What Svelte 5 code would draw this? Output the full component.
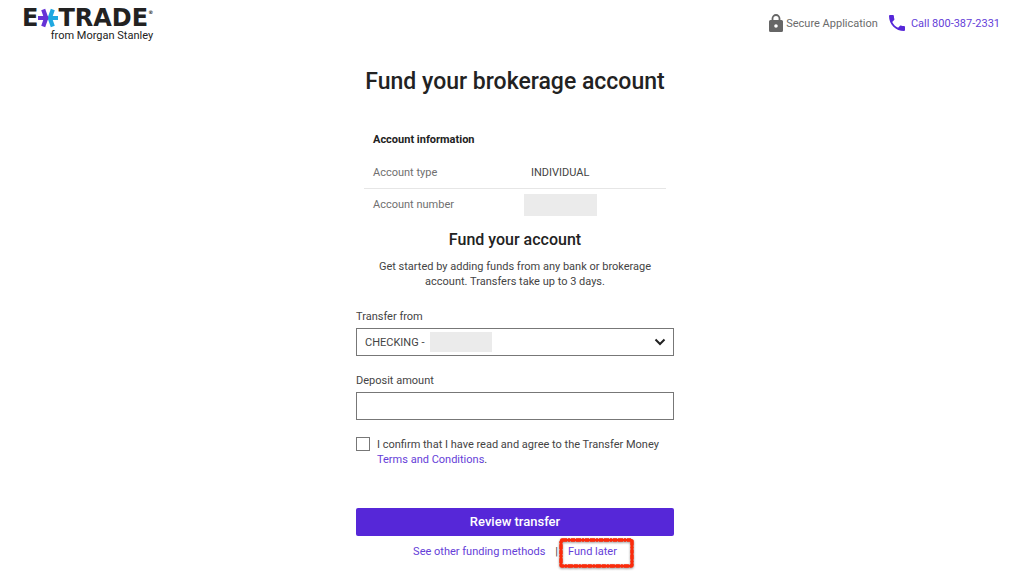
<script>
  let account = $state('checking');
  let amount = $state('');
  let agreed = $state(false);
</script>

<header>
  <a class="brand" href="#home" aria-label="E*TRADE from Morgan Stanley">
    <span class="wordmark">
      <span>E</span>
      <svg class="star" width="20" height="20" viewBox="0 0 20 20" aria-hidden="true">
        <g fill="none" stroke-width="4.2">
          <path d="M20 10H11M14.800 1.500L11.800 10l3 8.500" stroke="#20a8e0" />
          <path d="M0 10H10M5.200 1.500L8.200 10L5.200 18.500" stroke="#6633d6" />
        </g>
      </svg>
      <span>TRADE</span><sup>®</sup>
    </span>
    <span class="parent">from Morgan Stanley</span>
  </a>
  <div class="help">
    <span class="secure">
      <svg width="14" height="18" viewBox="0 0 14 18" aria-hidden="true">
        <path d="M3.500 7V4.500a3.500 3.500 0 0 1 7 0V7" fill="none" stroke="#666" stroke-width="1.800" />
        <path fill="#666" fill-rule="evenodd" d="M1.500 6h11A1.500 1.500 0 0 1 14 7.500v9a1.500 1.500 0 0 1-1.500 1.500h-11A1.500 1.500 0 0 1 0 16.500v-9A1.500 1.500 0 0 1 1.500 6zM7 10.200a1.800 1.800 0 1 0 0 3.600a1.800 1.800 0 0 0 0-3.600z" />
      </svg>
      Secure Application
    </span>
    <a class="call" href="tel:8003872331">
      <svg width="16" height="16" viewBox="3 3 18 18" aria-hidden="true">
        <path fill="#5627d8" d="M6.620 10.790c1.440 2.830 3.760 5.140 6.590 6.590l2.200-2.200c.27-.27.67-.36 1.020-.24 1.120.37 2.330.57 3.570.57.55 0 1 .45 1 1V20c0 .55-.45 1-1 1-9.390 0-17-7.610-17-17 0-.55.45-1 1-1h3.500c.55 0 1 .45 1 1 0 1.250.2 2.450.57 3.570.11.35.03.74-.25 1.020l-2.200 2.200z" />
      </svg>
      Call 800-387-2331
    </a>
  </div>
</header>

<main>
  <h1>Fund your brokerage account</h1>

  <section class="info">
    <h2>Account information</h2>
    <dl>
      <div><dt>Account type</dt><dd>INDIVIDUAL</dd></div>
      <div><dt>Account number</dt><dd class="masked"><span></span></dd></div>
    </dl>
  </section>

  <section class="intro">
    <h2>Fund your account</h2>
    <p>Get started by adding funds from any bank or brokerage account. Transfers take up to 3 days.</p>
  </section>

  <form onsubmit={(e) => e.preventDefault()}>
    <label class="label" for="from">Transfer from</label>
    <div class="select">
      <select id="from" bind:value={account}>
        <option value="checking">CHECKING -</option>
      </select>
      <span class="redacted"></span>
      <svg width="12" height="8" viewBox="0 0 12 8" aria-hidden="true">
        <path d="M1.500 1.500L6 6l4.500-4.500" fill="none" stroke="#222" stroke-width="2" />
      </svg>
    </div>

    <label class="label" for="amount">Deposit amount</label>
    <input id="amount" class="amount" type="text" inputmode="decimal" bind:value={amount} />

    <div class="agree">
      <input id="agree" type="checkbox" bind:checked={agreed} />
      <label for="agree">I confirm that I have read and agree to the Transfer Money <a href="#terms">Terms and Conditions</a>.</label>
    </div>

    <button type="submit">Review transfer</button>
  </form>

  <nav>
    <a href="#methods">See other funding methods</a>
    <span>|</span>
    <a class="later" href="#later">
      Fund later
      <svg width="78" height="34" viewBox="0 0 78 34" aria-hidden="true">
        <g fill="none" stroke="#fb2b0b">
          <rect x="3" y="3" width="71" height="26" rx="1" stroke-width="2.600" />
          <rect x="3" y="3" width="71" height="26" rx="1" stroke-width="3.400" stroke-dasharray="5 1 2 1 4 1" />
        </g>
      </svg>
    </a>
  </nav>
</main>

<style>
  :global(body) {
    background: #fff;
    color: #444;
    font: 11px/15px Roboto, "Liberation Sans", sans-serif;
  }
  a {
    color: #6540d8;
    text-decoration: none;
  }
  h1, h2, p, dl, dd {
    margin: 0;
  }
  h1, h2 {
    color: #222;
  }
  header {
    display: flex;
    justify-content: space-between;
    align-items: flex-start;
    padding: 9px 24px 0 22px;
  }
  .brand {
    display: flex;
    flex-direction: column;
    color: #222;
  }
  .wordmark {
    display: flex;
    align-items: center;
    height: 18px;
    font: bold 24px/18px "DejaVu Sans", sans-serif;
  }
  sup {
    align-self: flex-start;
    font-size: 5px;
    line-height: 6px;
  }
  .parent {
    align-self: flex-end;
    line-height: 17px;
  }
  .help, .secure, .call {
    display: flex;
    align-items: center;
  }
  .help {
    gap: 11px;
    padding-top: 5px;
  }
  .secure {
    gap: 3px;
    color: #6b6b6b;
  }
  .call {
    gap: 6px;
  }
  main {
    max-width: 318px;
    margin: 0 auto;
    padding: 24px 0 24px 6px;
  }
  h1 {
    font-size: 23px;
    line-height: 28px;
    font-weight: 500;
    text-align: center;
  }
  .info {
    padding: 35px 8px 0;
  }
  .info h2 {
    padding: 0 9px;
    font-size: 11px;
    line-height: 18px;
    font-weight: 700;
  }
  dl {
    padding-top: 7px;
  }
  dl div {
    display: grid;
    grid-template-columns: 158px 1fr;
    align-items: center;
    height: 32px;
    padding: 0 9px;
  }
  dl div + div {
    height: 31px;
    border-top: 1px solid #e6e6e6;
  }
  dt {
    color: #707070;
  }
  .masked {
    margin-left: -7px;
  }
  .masked span {
    display: block;
    width: 73px;
    height: 22px;
    background: #ebebeb;
  }
  .intro {
    padding: 10px 16px 0;
    text-align: center;
  }
  .intro h2 {
    font-size: 16px;
    line-height: 20px;
    font-weight: 500;
  }
  .intro p {
    padding-top: 9px;
  }
  form {
    padding-top: 20px;
  }
  .label {
    display: block;
    line-height: 16px;
    padding-bottom: 3px;
  }
  .select {
    position: relative;
    margin-bottom: 17px;
  }
  select, .amount {
    box-sizing: border-box;
    display: block;
    width: 100%;
    height: 28px;
    padding: 0 8px;
    border: 1px solid #777;
    border-radius: 0;
    background: #fff;
    color: #444;
    font: inherit;
    appearance: none;
  }
  .redacted {
    position: absolute;
    left: 74px;
    top: 4px;
    width: 62px;
    height: 20px;
    background: #ebebeb;
  }
  .select svg {
    position: absolute;
    right: 8px;
    top: 10px;
    pointer-events: none;
  }
  .agree {
    display: flex;
    align-items: flex-start;
    gap: 7px;
    padding: 17px 0 41px;
  }
  .agree input {
    flex: none;
    width: 14px;
    height: 14px;
    margin: 0;
    border: 1px solid #777;
    background: #fff;
    appearance: none;
  }
  .agree input:checked {
    background: #5627d8;
  }
  button {
    display: block;
    width: 100%;
    height: 28px;
    padding: 0;
    border: 0;
    border-radius: 2px;
    background: #5627d8;
    color: #fff;
    font: 500 13px/28px Roboto, "Liberation Sans", sans-serif;
  }
  nav {
    display: flex;
    justify-content: center;
    gap: 10px;
    padding-top: 8px;
  }
  .later {
    position: relative;
  }
  .later svg {
    position: absolute;
    left: -10px;
    top: -7px;
    filter: drop-shadow(0 1px 1px rgba(0, 0, 0, 0.4));
  }
</style>
